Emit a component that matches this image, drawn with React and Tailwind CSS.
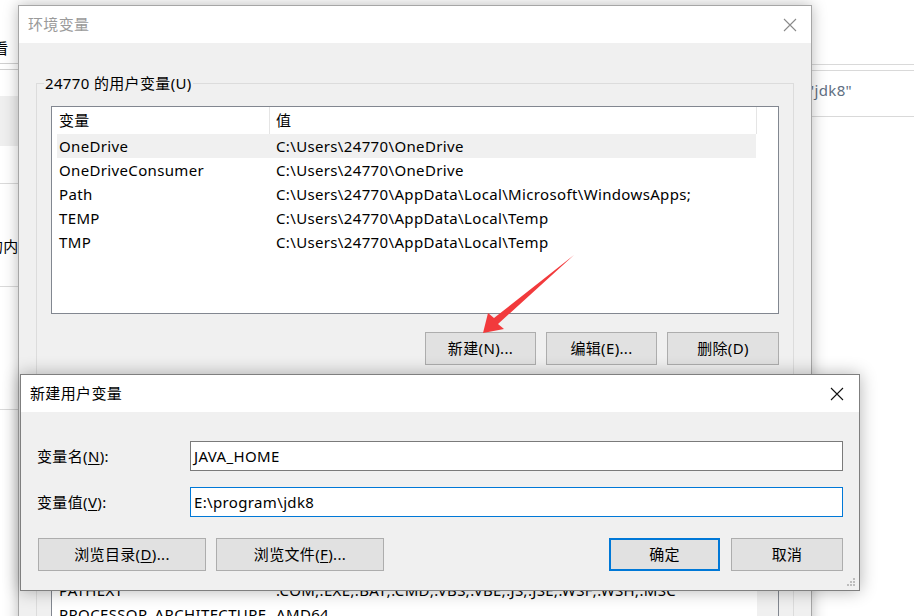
const font = { fontFamily: '"Noto Sans", "Noto Sans CJK SC", sans-serif' };

const userVars = [
  ['OneDrive', 'C:\\Users\\24770\\OneDrive', true],
  ['OneDriveConsumer', 'C:\\Users\\24770\\OneDrive'],
  ['Path', 'C:\\Users\\24770\\AppData\\Local\\Microsoft\\WindowsApps;'],
  ['TEMP', 'C:\\Users\\24770\\AppData\\Local\\Temp'],
  ['TMP', 'C:\\Users\\24770\\AppData\\Local\\Temp'],
];

const sysVars = [
  ['ComSpec', 'C:\\Windows\\system32\\cmd.exe'],
  ['DriverData', 'C:\\Windows\\System32\\Drivers\\DriverData'],
  ['NUMBER_OF_PROCESSORS', '8'],
  ['OS', 'Windows_NT'],
  ['Path', 'C:\\Windows\\system32;C:\\Windows;C:\\Windows\\System32\\Wbem;'],
  ['PATHEXT', '.COM;.EXE;.BAT;.CMD;.VBS;.VBE;.JS;.JSE;.WSF;.WSH;.MSC'],
  ['PROCESSOR_ARCHITECTURE', 'AMD64'],
];

function CloseX({ color }) {
  return (
    <svg width="14" height="14" viewBox="0 0 14 14" className="block">
      <path d="M1 1 L13 13 M13 1 L1 13" stroke={color} strokeWidth="1.1" fill="none" />
    </svg>
  );
}

function WinButton({ children, primary, className = '' }) {
  return (
    <div
      className={
        'flex h-[33px] items-center justify-center bg-[#e1e1e1] text-[15px] text-black ' +
        (primary ? 'border-2 border-[#0078d7] ' : 'border border-[#adadad] ') +
        className
      }
    >
      {children}
    </div>
  );
}

function VarList({ rows, header = true, scroll, height }) {
  return (
    <div className={'flex border border-[#828790] bg-white ' + height}>
      <div className="flex flex-1 flex-col">
        {header && (
          <div className="flex h-[27px] shrink-0 items-center">
            <div className="flex h-full w-[218px] items-center border-r border-[#e5e5e5] pl-[7px]">变量</div>
            <div className="flex h-full w-[487px] items-center border-r border-[#e5e5e5] pl-[6px]">值</div>
          </div>
        )}
        {rows.map(([k, v, sel]) => (
          <div key={k} className="flex h-[24px] shrink-0 items-center">
            <div className={'ml-[5px] flex h-full w-[699px] items-center ' + (sel ? 'bg-[#f0f0f0]' : '')}>
              <div className="w-[219px] shrink-0 truncate pl-[2px]">{k}</div>
              <div className="whitespace-nowrap">{v}</div>
            </div>
          </div>
        ))}
      </div>
      {scroll && <div className="w-[21px] shrink-0 bg-[#f0f0f0]" />}
    </div>
  );
}

function EnvDialog() {
  return (
    <div className="absolute left-[18px] top-[5px] flex h-[700px] w-[794px] flex-col border border-[#a6a6a6] bg-[#f0f0f0] shadow-[0_0_14px_rgba(0,0,0,0.28)]">
      <div className="flex h-[37px] shrink-0 items-center justify-between bg-white pl-[9px] pr-[14px]">
        <span className="text-[15px] text-[#9a9a9a]">环境变量</span>
        <CloseX color="#8a8a8a" />
      </div>
      <div className="flex flex-col px-[17px] pt-[30px] text-[15px] text-black">
        <fieldset className="border border-[#dcdcdc] px-[14px] pb-[30px]">
          <legend className="ml-[-7px] px-[1px] leading-[20px]">24770 的用户变量(U)</legend>
          <div className="mt-[13px]">
            <VarList rows={userVars} height="h-[208px]" />
          </div>
          <div className="mt-[18px] flex justify-end gap-[10px]">
            <WinButton className="w-[111px]">新建(N)...</WinButton>
            <WinButton className="w-[111px]">编辑(E)...</WinButton>
            <WinButton className="w-[112px]">删除(D)</WinButton>
          </div>
        </fieldset>
        <fieldset className="mt-[1px] border border-[#dcdcdc] px-[14px]">
          <legend className="ml-[-7px] px-[1px] leading-[20px]">系统变量(S)</legend>
          <div className="mt-[13px]">
            <VarList rows={sysVars} scroll height="h-[260px]" />
          </div>
        </fieldset>
      </div>
    </div>
  );
}

function Field({ label, mnemonic, value, focused }) {
  return (
    <div className="flex items-center">
      <div className="w-[153px] shrink-0">
        {label}(<span className="underline underline-offset-2">{mnemonic}</span>):
      </div>
      <div
        className={
          'flex h-[30px] w-[654px] items-center bg-white pl-[3px] ' +
          (focused ? 'border border-[#0078d7]' : 'border border-[#7a7a7a]')
        }
      >
        {value}
      </div>
    </div>
  );
}

function Grip() {
  const dots = [
    [6, 0],
    [3, 3],
    [6, 3],
    [0, 6],
    [3, 6],
    [6, 6],
  ];
  return (
    <svg width="9" height="9" viewBox="0 0 9 9" className="block">
      {dots.map(([x, y]) => (
        <rect key={x + '-' + y} x={x} y={y} width="2" height="2" fill="#bdbdbd" />
      ))}
    </svg>
  );
}

function NewVarDialog() {
  return (
    <div className="absolute left-[20px] top-[374px] flex h-[217px] w-[840px] flex-col border border-[#7f7f7f] bg-[#f0f0f0] text-[15px] text-black shadow-[0_0_16px_rgba(0,0,0,0.3)]">
      <div className="flex h-[37px] shrink-0 items-center justify-between bg-white pl-[9px] pr-[15px]">
        <span>新建用户变量</span>
        <CloseX color="#111" />
      </div>
      <div className="relative flex flex-1 flex-col pl-[16px] pr-[16px] pt-[29px]">
        <Field label="变量名" mnemonic="N" value="JAVA_HOME" />
        <div className="mt-[16px]">
          <Field label="变量值" mnemonic="V" value="E:\program\jdk8" focused />
        </div>
        <div className="mt-[21px] flex items-center">
          <WinButton className="ml-[1px] w-[168px]">
            浏览目录(<span className="underline underline-offset-2">D</span>)...
          </WinButton>
          <WinButton className="ml-[10px] w-[168px]">
            浏览文件(<span className="underline underline-offset-2">F</span>)...
          </WinButton>
          <div className="flex-1" />
          <WinButton primary className="w-[111px]">确定</WinButton>
          <WinButton className="ml-[11px] w-[112px]">取消</WinButton>
        </div>
        <div className="absolute bottom-[3px] right-[3px]">
          <Grip />
        </div>
      </div>
    </div>
  );
}

function Arrow() {
  return (
    <svg className="absolute left-0 top-0" width="914" height="616" viewBox="0 0 914 616">
      <polygon
        points="483,333 488,313 494,318 574,255 498,324 504,329"
        fill="#f23a3c"
      />
    </svg>
  );
}

export default function App() {
  return (
    <div className="relative h-[616px] w-[914px] overflow-hidden bg-white tracking-[0.35px]" style={font}>
      {/* window behind on the left */}
      <div className="absolute left-0 top-0 flex w-[18px] flex-col text-[15px] text-black">
        <div className="ml-[-22px] mt-[37px] h-[22px] whitespace-nowrap leading-[22px]">查看</div>
        <div className="mt-[4px] h-px bg-[#d0d0d0]" />
        <div className="mt-[5px] h-px bg-[#d0d0d0]" />
        <div className="mt-[26px] h-[50px] bg-[#efefef]" />
        <div className="mt-[37px] h-px bg-[#dadada]" />
        <div className="ml-[-12px] mt-[52px] whitespace-nowrap leading-[20px]">的内容</div>
        <div className="mt-[30px] h-px bg-[#dadada]" />
        <div className="mt-[122px] h-px bg-[#dadada]" />
      </div>
      {/* window behind on the right */}
      <div className="absolute left-[800px] top-0 flex w-[114px] flex-col">
        <div className="mt-[64px] h-px bg-[#d9d9d9]" />
        <div className="mt-[5px] h-px bg-[#d9d9d9]" />
        <div className="ml-[8px] mt-[8px] h-[22px] whitespace-nowrap text-[15px] leading-[22px] text-[#5f6f82]">
          "jdk8"
        </div>
        <div className="mt-[15px] h-px bg-[#d9d9d9]" />
      </div>
      <EnvDialog />
      <Arrow />
      <NewVarDialog />
    </div>
  );
}
